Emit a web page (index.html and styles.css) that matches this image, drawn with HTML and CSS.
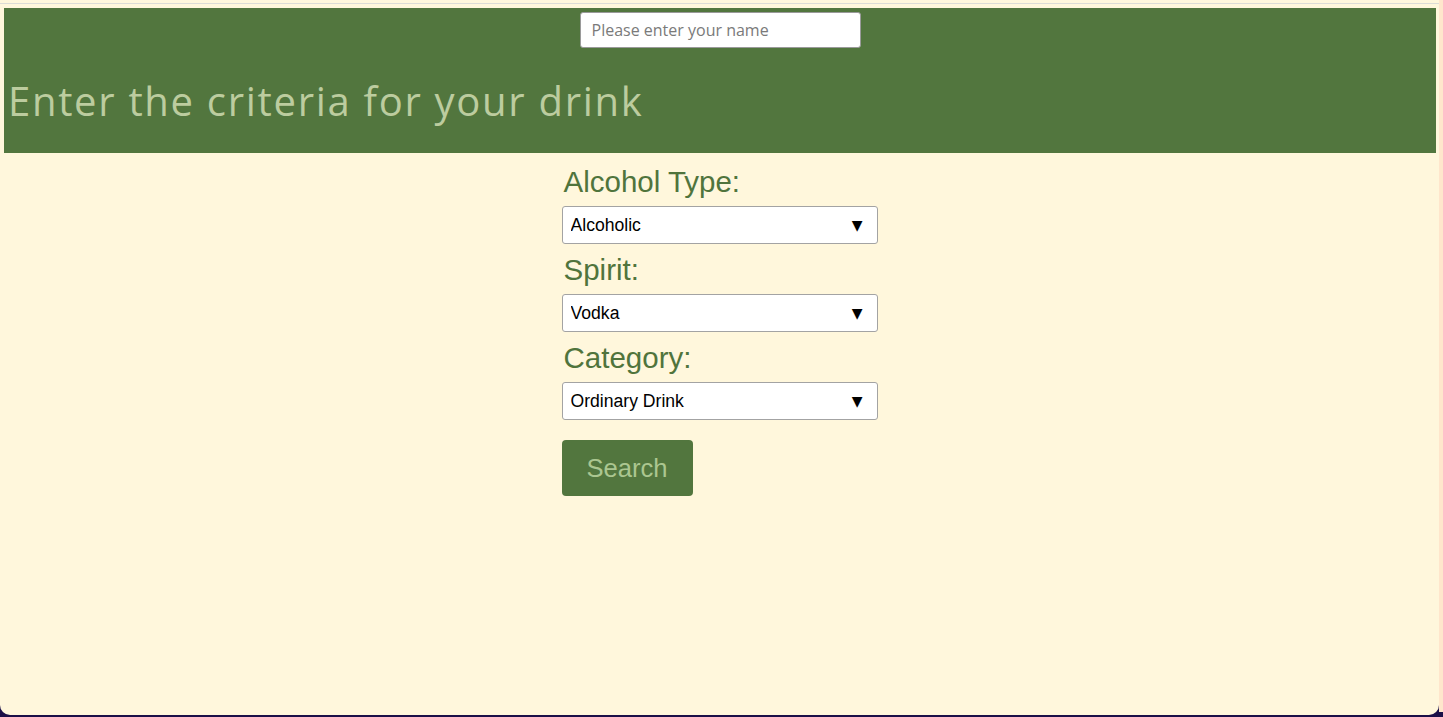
FILE: index.html
```html
<!DOCTYPE html>
<html lang="en">
<head>
<meta charset="utf-8">
<title>Drink finder</title>
<link rel="stylesheet" href="styles.css">
</head>
<body>
<div class="frame">
  <div class="window">
    <div class="topline"></div>
    <header class="header">
      <input class="name-input" type="text" placeholder="Please enter your name">
      <h1 class="title">Enter the criteria for your drink</h1>
    </header>
    <form class="criteria">
      <label class="field-label" for="alc">Alcohol Type:</label>
      <div class="select-wrap">
        <select id="alc" class="select"><option>Alcoholic</option><option>Non alcoholic</option></select>
      </div>
      <label class="field-label" for="spirit">Spirit:</label>
      <div class="select-wrap">
        <select id="spirit" class="select"><option>Vodka</option><option>Gin</option></select>
      </div>
      <label class="field-label" for="cat">Category:</label>
      <div class="select-wrap">
        <select id="cat" class="select"><option>Ordinary Drink</option><option>Cocktail</option></select>
      </div>
      <button type="button" class="search-btn">Search</button>
    </form>
  </div>
  <div class="side-strip"></div>
</div>
</body>
</html>
```
FILE: styles.css
```css
html, body {
  margin: 0;
  padding: 0;
  height: 717px;
  overflow: hidden;
  background: #1b0f47;
}

.frame {
  display: flex;
  height: 715px;
}

.window {
  width: 1439px;
  height: 715px;
  background: #fff7dc;
  border-radius: 0 0 10px 10px;
  display: flex;
  flex-direction: column;
  overflow: hidden;
}

.side-strip {
  width: 4px;
  height: 712px;
  background: #ffe6cc;
}

.topline {
  margin-top: 3px;
  height: 1px;
  background: #dcdcd6;
}

.header {
  margin: 4px 3px 0 4px;
  height: 145px;
  background: #52763e;
  display: flex;
  flex-direction: column;
  align-items: center;
}

.name-input {
  margin-top: 4px;
  width: 281px;
  height: 36px;
  box-sizing: border-box;
  border: 1px solid #9a9a9a;
  border-radius: 3px;
  padding: 0 11px;
  font-family: "Open Sans", sans-serif;
  font-size: 16px;
  background: #fff;
}

.name-input::placeholder {
  color: #7a7a7a;
}

.title {
  align-self: stretch;
  margin: 27px 0 0 4px;
  font-family: "Open Sans", sans-serif;
  font-weight: 400;
  font-size: 40px;
  line-height: 52px;
  color: #bccc9f;
  letter-spacing: 1.7px;
}

.criteria {
  width: 316px;
  margin: 14px auto 0;
  display: flex;
  flex-direction: column;
  align-items: flex-start;
}

.field-label {
  display: block;
  margin: 0 0 9px 2px;
  font-family: "Liberation Sans", Arial, sans-serif;
  font-size: 29.5px;
  line-height: 30px;
  color: #50743c;
}

.select-wrap {
  position: relative;
  width: 316px;
  margin-bottom: 11px;
}

.select-wrap::after {
  content: "▼";
  position: absolute;
  right: 15px;
  top: 10px;
  font-size: 14px;
  line-height: 18px;
  color: #000;
  pointer-events: none;
  font-family: "DejaVu Sans", sans-serif;
}

.select {
  -webkit-appearance: none;
  appearance: none;
  width: 316px;
  height: 38px;
  box-sizing: border-box;
  border: 1px solid #a3a3a3;
  border-radius: 3px;
  background: #fff;
  padding: 0 8px;
  font-family: "Liberation Sans", Arial, sans-serif;
  font-size: 17.6px;
  color: #000;
}

.search-btn {
  margin-top: 9px;
  width: 131px;
  height: 56px;
  border: none;
  border-radius: 4px;
  background: #52763e;
  color: #abc690;
  font-family: "Liberation Sans", Arial, sans-serif;
  font-size: 25.6px;
  padding: 0;
  cursor: pointer;
}
```
